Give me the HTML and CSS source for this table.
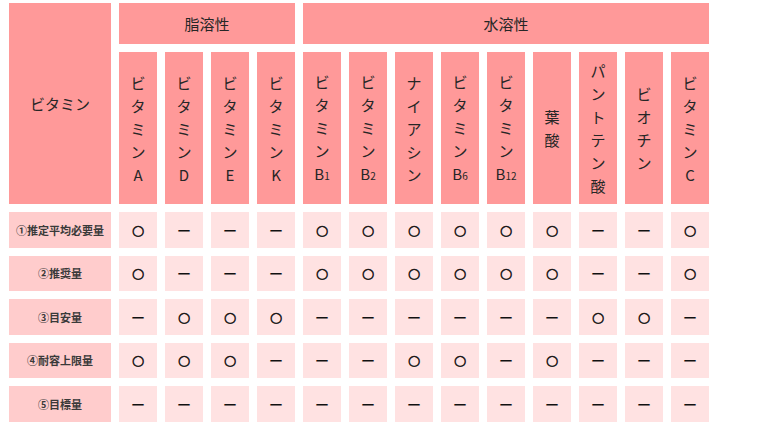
FILE: index.html
```html
<!DOCTYPE html>
<html lang="ja">
<head>
<meta charset="utf-8">
<link rel="stylesheet" href="styles.css">
</head>
<body>
<div class="table">
  <div class="h corner">ビタミン</div>
  <div class="h group fat">脂溶性</div>
  <div class="h group water">水溶性</div>

  <div class="h col"><span class="v">ビ<br>タ<br>ミ<br>ン<br>A</span></div>
  <div class="h col"><span class="v">ビ<br>タ<br>ミ<br>ン<br>D</span></div>
  <div class="h col"><span class="v">ビ<br>タ<br>ミ<br>ン<br>E</span></div>
  <div class="h col"><span class="v">ビ<br>タ<br>ミ<br>ン<br>K</span></div>
  <div class="h col"><span class="v">ビ<br>タ<br>ミ<br>ン<br>B<span class="sub">1</span></span></div>
  <div class="h col"><span class="v">ビ<br>タ<br>ミ<br>ン<br>B<span class="sub">2</span></span></div>
  <div class="h col"><span class="v">ナ<br>イ<br>ア<br>シ<br>ン</span></div>
  <div class="h col"><span class="v">ビ<br>タ<br>ミ<br>ン<br>B<span class="sub">6</span></span></div>
  <div class="h col"><span class="v">ビ<br>タ<br>ミ<br>ン<br>B<span class="sub">12</span></span></div>
  <div class="h col"><span class="v">葉<br>酸</span></div>
  <div class="h col"><span class="v">パ<br>ン<br>ト<br>テ<br>ン<br>酸</span></div>
  <div class="h col"><span class="v">ビ<br>オ<br>チ<br>ン</span></div>
  <div class="h col"><span class="v">ビ<br>タ<br>ミ<br>ン<br>C</span></div>

  <div class="label">①推定平均必要量</div>
  <div class="d o">○</div><div class="d">ー</div><div class="d">ー</div><div class="d">ー</div>
  <div class="d o">○</div><div class="d o">○</div><div class="d o">○</div><div class="d o">○</div><div class="d o">○</div><div class="d o">○</div><div class="d">ー</div><div class="d">ー</div><div class="d o">○</div>

  <div class="label">②推奨量</div>
  <div class="d o">○</div><div class="d">ー</div><div class="d">ー</div><div class="d">ー</div>
  <div class="d o">○</div><div class="d o">○</div><div class="d o">○</div><div class="d o">○</div><div class="d o">○</div><div class="d o">○</div><div class="d">ー</div><div class="d">ー</div><div class="d o">○</div>

  <div class="label">③目安量</div>
  <div class="d">ー</div><div class="d o">○</div><div class="d o">○</div><div class="d o">○</div>
  <div class="d">ー</div><div class="d">ー</div><div class="d">ー</div><div class="d">ー</div><div class="d">ー</div><div class="d">ー</div><div class="d o">○</div><div class="d o">○</div><div class="d">ー</div>

  <div class="label">④耐容上限量</div>
  <div class="d o">○</div><div class="d o">○</div><div class="d o">○</div><div class="d">ー</div>
  <div class="d">ー</div><div class="d">ー</div><div class="d o">○</div><div class="d o">○</div><div class="d">ー</div><div class="d o">○</div><div class="d">ー</div><div class="d">ー</div><div class="d">ー</div>

  <div class="label">⑤目標量</div>
  <div class="d">ー</div><div class="d">ー</div><div class="d">ー</div><div class="d">ー</div>
  <div class="d">ー</div><div class="d">ー</div><div class="d">ー</div><div class="d">ー</div><div class="d">ー</div><div class="d">ー</div><div class="d">ー</div><div class="d">ー</div><div class="d">ー</div>
</div>
</body>
</html>
```

FILE: styles.css
```css
html, body {
  margin: 0;
  background: #ffffff;
}
body {
  padding: 3px 0 0 9px;
  font-family: "Noto Sans CJK JP", "Noto Sans", sans-serif;
  color: #262626;
}
.table {
  display: grid;
  grid-template-columns: 102px repeat(13, 38px);
  grid-template-rows: 41px 152px repeat(5, 35.5px);
  gap: 8px;
}
.h {
  background: #ff9999;
  display: flex;
  align-items: center;
  justify-content: center;
  text-align: center;
  font-size: 15px;
}
.corner {
  grid-row: 1 / 3;
}
.fat {
  grid-column: 2 / 6;
}
.water {
  grid-column: 6 / 15;
}
.v {
  display: block;
  line-height: 23px;
}
.sub {
  font-size: 10px;
}
.label {
  background: #ffcccc;
  display: flex;
  align-items: center;
  justify-content: center;
  font-size: 11px;
  font-weight: bold;
  color: #3a3a3a;
}
.d {
  background: #ffe2e2;
  display: flex;
  align-items: center;
  justify-content: center;
  font-size: 14px;
  font-weight: 500;
  color: #111;
}
.o {
  font-family: "DejaVu Sans", sans-serif;
  font-size: 14px;
  font-weight: bold;
  -webkit-text-stroke: 0.5px #111;
}
```
